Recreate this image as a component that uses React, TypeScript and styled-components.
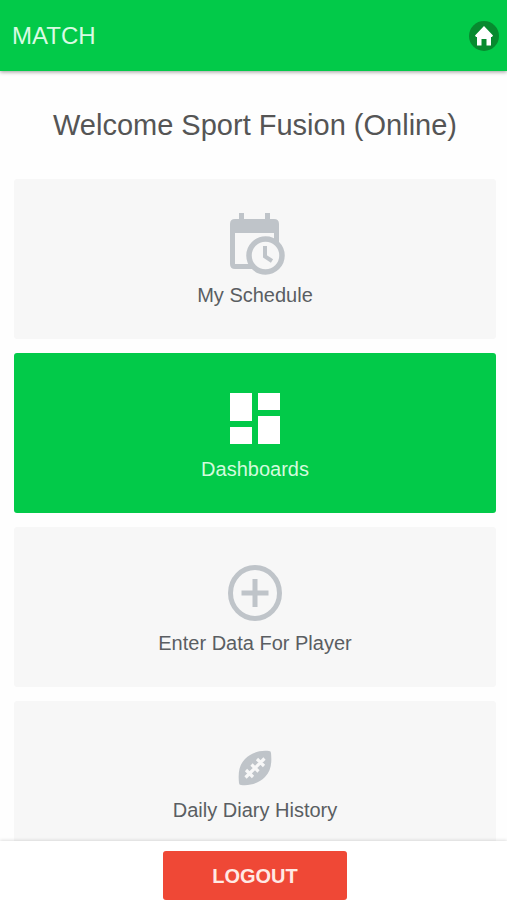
import React from "react";
import styled, { createGlobalStyle } from "styled-components";

const GlobalStyle = createGlobalStyle`
  * { box-sizing: border-box; }
  body {
    margin: 0;
    background: #fefefe;
    font-family: "Liberation Sans", Arial, sans-serif;
  }
`;

const Page = styled.div`
  display: flex;
  flex-direction: column;
  height: 100vh;
`;

const Header = styled.header`
  position: relative;
  display: flex;
  flex: none;
  align-items: center;
  justify-content: space-between;
  height: 71px;
  padding: 0 8px 0 12px;
  background: #02ca49;
  box-shadow: 0 1px 4px rgba(0, 0, 0, 0.4);
`;

const Brand = styled.span`
  color: #d9fbe3;
  font-size: 24px;
  line-height: 32px;
`;

const HomeLink = styled.a`
  display: flex;
  align-items: center;
  justify-content: center;
  width: 30px;
  height: 30px;
  border-radius: 50%;
  background: #078a2f;
`;

const Content = styled.main`
  flex: 1;
  min-height: 0;
  padding: 0 11px 14px 14px;
  overflow-y: auto;
  scrollbar-width: none;
`;

const Welcome = styled.h1`
  margin: 0;
  padding: 36px 0;
  color: #555;
  font-size: 29px;
  font-weight: 400;
  line-height: 36px;
  text-align: center;
`;

const TileList = styled.nav`
  display: flex;
  flex-direction: column;
  gap: 14px;
`;

const Tile = styled.button<{ $active?: boolean }>`
  display: flex;
  flex-direction: column;
  align-items: center;
  justify-content: center;
  gap: 8px;
  width: 100%;
  height: 160px;
  padding: 0;
  border: 0;
  border-radius: 3px;
  background: ${(p) => (p.$active ? "#02ca49" : "#f7f7f7")};
  color: ${(p) => (p.$active ? "#d3fbdd" : "#5a5e62")};
  font-family: inherit;
  font-size: 20px;
  line-height: 24px;
  cursor: pointer;

  svg {
    display: block;
    color: ${(p) => (p.$active ? "#fff" : "#bfc4c9")};
  }
`;

const Footer = styled.footer`
  position: relative;
  display: flex;
  flex: none;
  justify-content: center;
  padding: 10px 0 0 3px;
  background: #fff;
  box-shadow: 0 -1px 3px rgba(0, 0, 0, 0.12);
`;

const LogoutButton = styled.button`
  width: 184px;
  height: 49px;
  padding: 0;
  border: 0;
  border-radius: 3px;
  background: #ef4836;
  color: #ffe9e4;
  font-family: inherit;
  font-size: 20px;
  font-weight: 700;
  line-height: 24px;
  cursor: pointer;
`;

const HomeIcon = () => (
  <svg width="20" height="22" viewBox="0 0 20 22" fill="#fff" aria-hidden="true">
    <path d="M10 1 19 10.5 18 12H17V20.5H12.5V14H7.5V20.5H3V12H2L1 10.5Z" />
  </svg>
);

const ScheduleIcon = () => (
  <svg width="62" height="64" viewBox="-6 0 62 64" aria-hidden="true">
    <path
      fill="currentColor"
      fillRule="evenodd"
      d="M9 2H14V8H35V2H40V8H44Q49 8 49 13V53Q49 58 44 58H5Q0 58 0 53V13Q0 8 5 8H9ZM5 22V53H44V22Z"
    />
    <circle cx="35.5" cy="44.5" r="16.5" fill="#f7f7f7" stroke="currentColor" strokeWidth="5.5" />
    <path d="M35 35V45.5L42 50" fill="none" stroke="currentColor" strokeWidth="4" />
  </svg>
);

const DashboardIcon = () => (
  <svg width="50" height="64" viewBox="0 0 50 64" fill="currentColor" aria-hidden="true">
    <path d="M0 8H22V36H0ZM0 42H22V59H0ZM28 8H50V25H28ZM28 31H50V59H28Z" />
  </svg>
);

const AddIcon = () => (
  <svg width="54" height="64" viewBox="0 0 54 64" fill="none" stroke="currentColor" aria-hidden="true">
    <ellipse cx="27" cy="34" rx="24.5" ry="25.5" strokeWidth="5" />
    <path d="M27 20V48M13.5 34H40.5" strokeWidth="5" />
  </svg>
);

const FootballIcon = () => (
  <svg width="34" height="50" viewBox="0 0 34 50" aria-hidden="true">
    <path
      fill="currentColor"
      d="M31 11C21 10 13 13 7 19C1 25 0 33 1 43Q1 45 3 45C13 46 21 43 27 37C33 31 34 23 33 13Q33 11 31 11Z"
    />
    <path
      d="M7.500 37.500 26.500 18.500M8 30 15 37M13.500 24.500 20.500 31.500M19 19 26 26"
      fill="none"
      stroke="#f7f7f7"
      strokeWidth="3.2"
    />
  </svg>
);

const tiles = [
  { label: "My Schedule", Icon: ScheduleIcon },
  { label: "Dashboards", Icon: DashboardIcon, active: true },
  { label: "Enter Data For Player", Icon: AddIcon },
  { label: "Daily Diary History", Icon: FootballIcon },
];

export default function App() {
  return (
    <>
      <GlobalStyle />
      <Page>
        <Header>
          <Brand>MATCH</Brand>
          <HomeLink href="#" aria-label="Home">
            <HomeIcon />
          </HomeLink>
        </Header>
        <Content>
          <Welcome>Welcome Sport Fusion (Online)</Welcome>
          <TileList aria-label="Main menu">
            {tiles.map(({ label, Icon, active }) => (
              <Tile key={label} type="button" $active={active}>
                <Icon />
                {label}
              </Tile>
            ))}
          </TileList>
        </Content>
        <Footer>
          <LogoutButton type="button">LOGOUT</LogoutButton>
        </Footer>
      </Page>
    </>
  );
}
